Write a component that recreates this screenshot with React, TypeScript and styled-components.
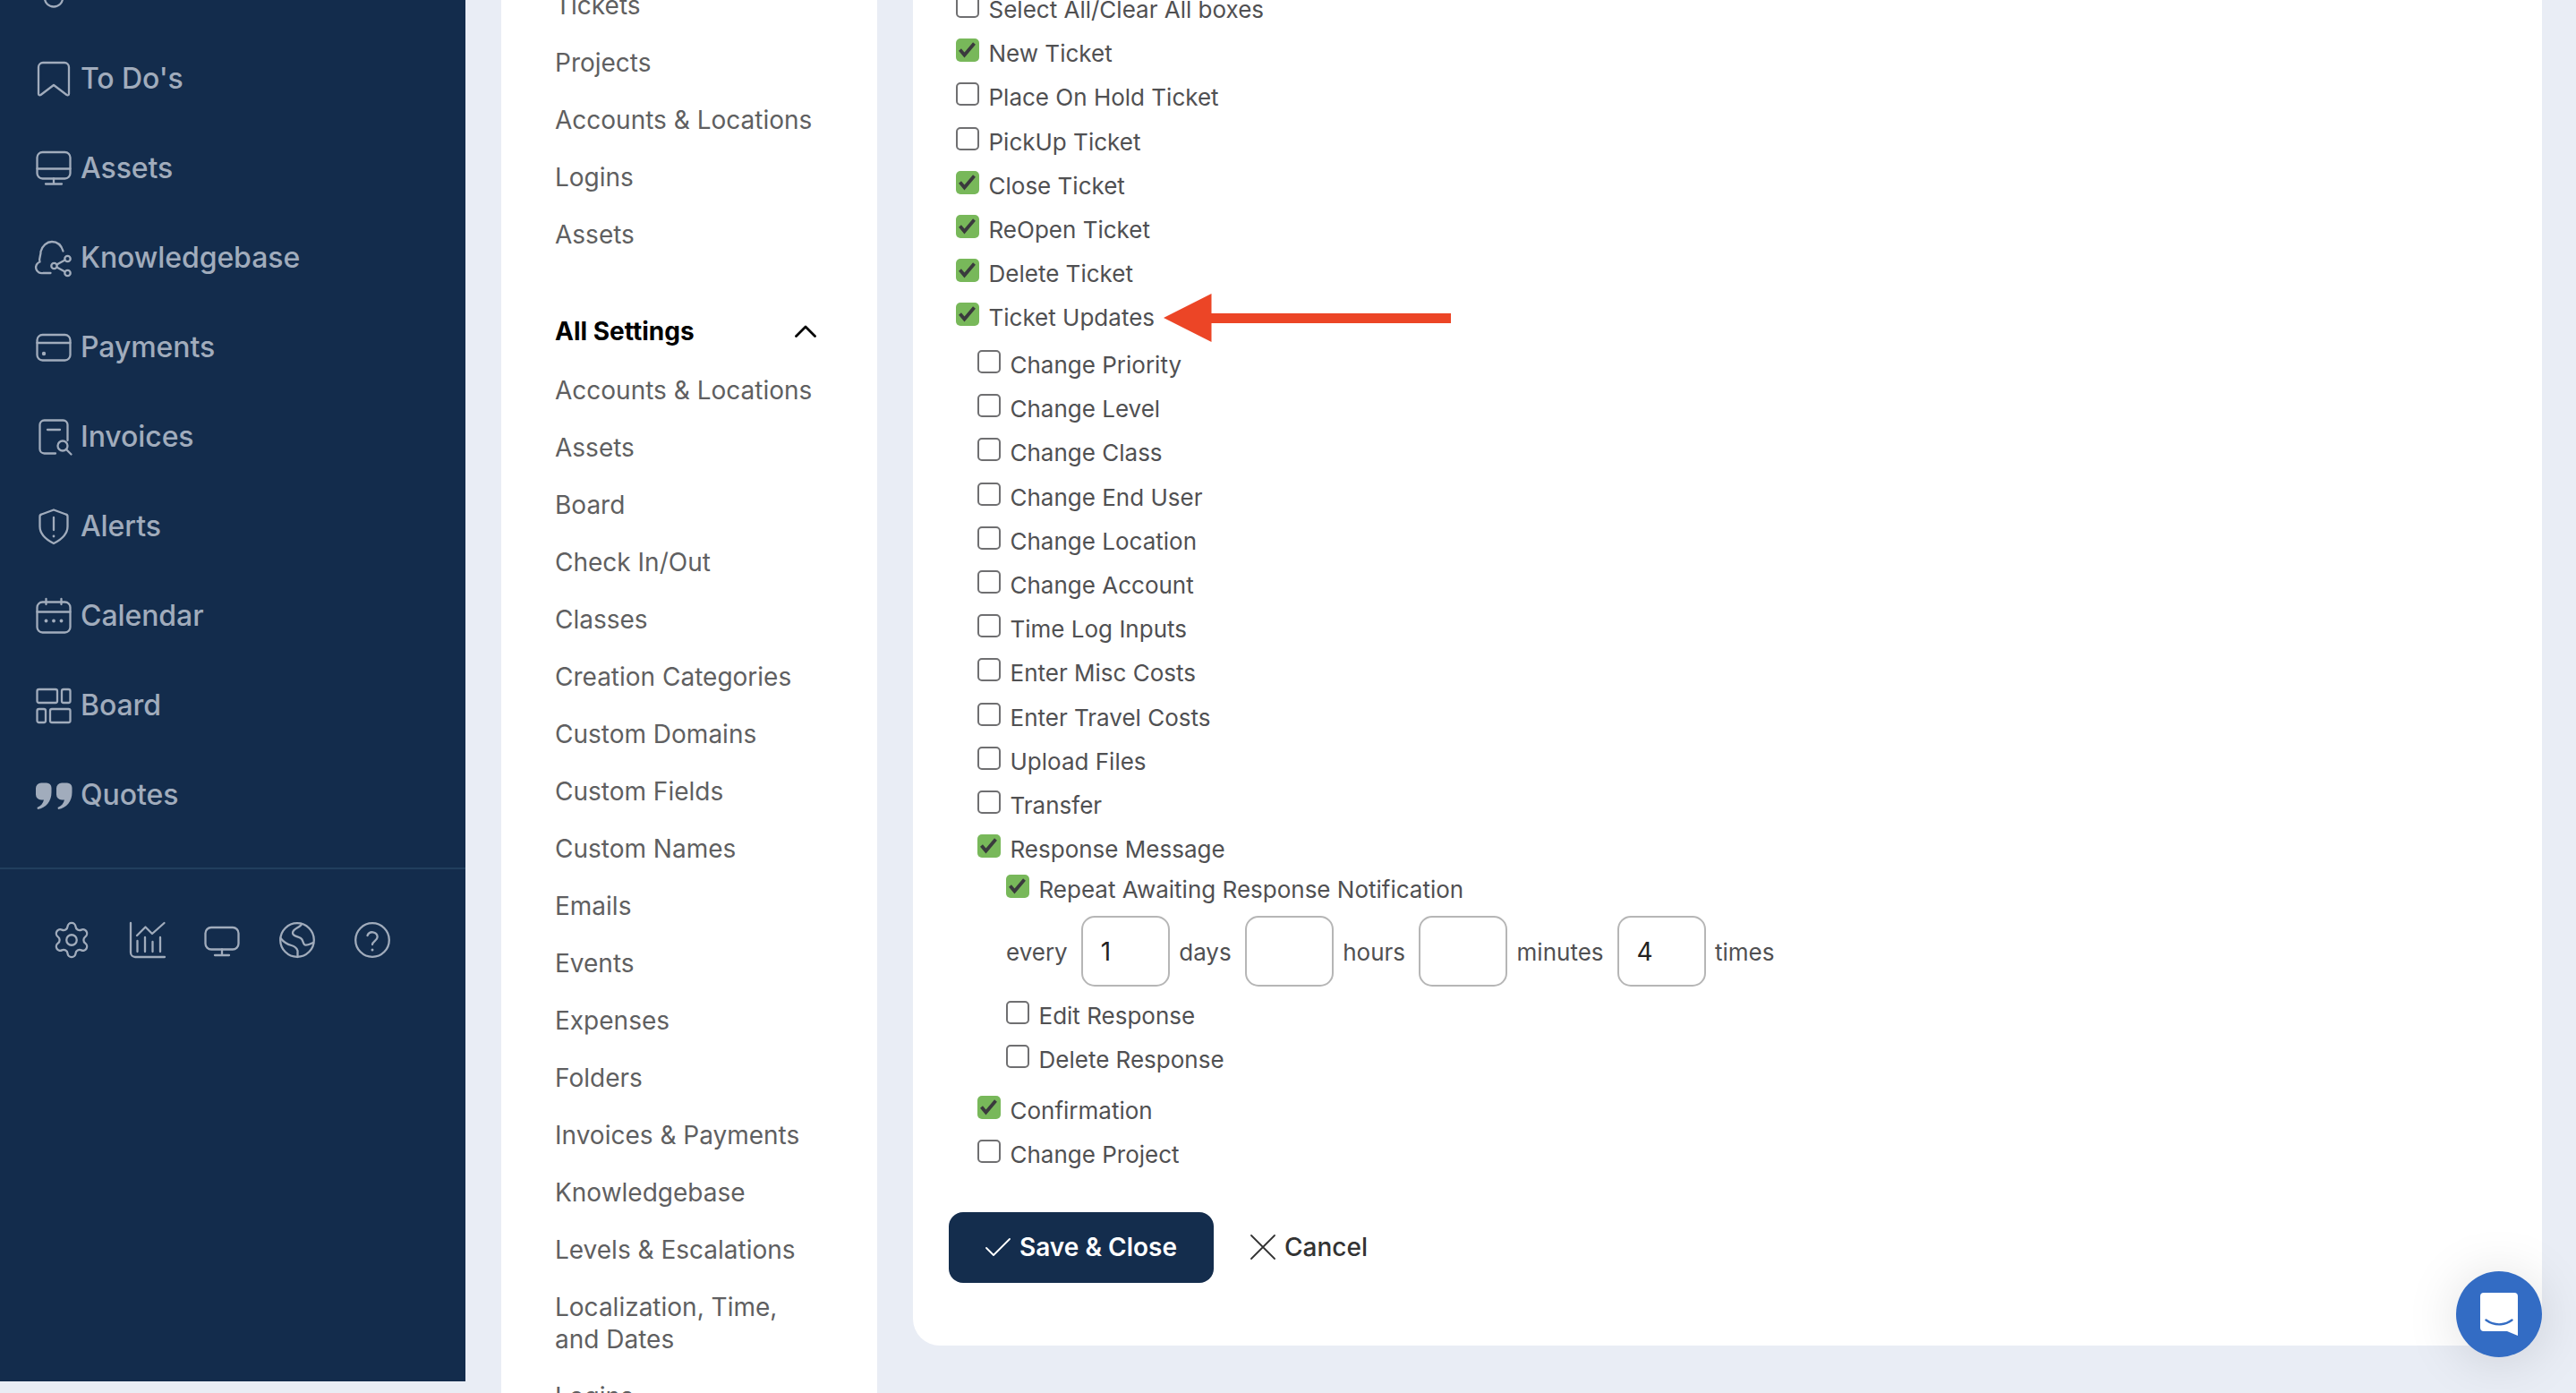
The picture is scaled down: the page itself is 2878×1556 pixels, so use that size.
import React from 'react';
import styled, { createGlobalStyle } from 'styled-components';
import { Settings } from 'lucide-react';

const Global = createGlobalStyle`
  html, body { margin: 0; padding: 0; background: #e9edf5; }
  * { box-sizing: border-box; }
  body { font-family: Inter, "Liberation Sans", sans-serif; }
`;

const Shell = styled.div`
  position: relative;
  display: flex;
  align-items: flex-start;
  width: 2878px;
  height: 1556px;
  overflow: hidden;
  background: #e9edf5;
`;

const Sidebar = styled.aside`
  flex: none;
  width: 520px;
  height: 1543px;
  background: #132c4c;
  color: #a1acbc;
  overflow: hidden;
`;

const Nav = styled.nav`
  margin-top: -62.5px;
  display: flex;
  flex-direction: column;
`;

const NavItem = styled.a`
  display: flex;
  align-items: center;
  gap: 10px;
  height: 100px;
  padding-left: 40px;
  font-size: 32px;
  font-weight: 500;
  letter-spacing: -0.08px;
  color: #a1acbc;
`;

const Glyph = styled.svg.attrs({ viewBox: '0 0 40 40', fill: 'none', stroke: 'currentColor', strokeWidth: 2.3, strokeLinecap: 'round', strokeLinejoin: 'round' })`
  flex: none;
  width: 40px;
  height: 40px;
  overflow: visible;
`;

const Divider = styled.hr`
  margin: 31px 0 0;
  border: 0;
  height: 2px;
  background: #213f5e;
`;

const ToolRow = styled.div`
  display: flex;
  gap: 44px;
  padding: 59px 0 0 60px;
  color: #a1acbc;
`;

const GearIcon = styled(Settings)`
  flex: none;
  margin: -3px;
`;

const Middle = styled.div`
  flex: none;
  width: 420px;
  height: 1556px;
  margin-left: 40px;
  background: #fff;
  overflow: hidden;
`;

const MenuList = styled.ul`
  list-style: none;
  margin: -26px 0 0;
  padding: 0;
`;

const MenuItem = styled.li`
  padding: 14px 70px 14px 60px;
  font-size: 28px;
  line-height: 36px;
  color: #5f5f61;
`;

const MenuHeading = styled.li`
  display: flex;
  align-items: center;
  justify-content: space-between;
  margin: 44px 0 2px;
  padding: 14px 68px 14px 60px;
  font-size: 28px;
  line-height: 36px;
  font-weight: 700;
  color: #000;
`;

const Main = styled.main`
  flex: none;
  width: 1820px;
  height: 1503px;
  margin-left: 40px;
  background: #fff;
  border-radius: 0 0 30px 30px;
  padding: 0 0 0 48px;
  overflow: hidden;
`;

const Form = styled.form`
  margin-top: -6px;
`;

const CheckRow = styled.label<{ $h?: number }>`
  display: flex;
  align-items: flex-start;
  gap: 10.5px;
  height: ${(p) => p.$h ?? 49.2}px;
  font-size: 26px;
  line-height: 33px;
  color: #505052;
`;

const Box = styled.span<{ $checked?: boolean }>`
  flex: none;
  display: block;
  width: 26px;
  height: 26px;
  border-radius: 5px;
  border: ${(p) => (p.$checked ? 'none' : '2px solid #6f6f71')};
  background: ${(p) => (p.$checked ? '#78b85a' : '#fff')};
`;

const Tick = styled.svg.attrs({ viewBox: '0 0 26 26', fill: 'none' })`
  display: block;
  width: 26px;
  height: 26px;
`;

const SubGroup = styled.div`
  margin-top: 3.5px;
  padding-left: 24px;
`;

const Nested = styled.div`
  margin-top: -4px;
  padding-left: 32px;
`;

const EveryRow = styled.div`
  display: flex;
  align-items: center;
  height: 79px;
  margin-bottom: 16px;
  padding-top: 1px;
  font-size: 26px;
  color: #505052;
`;

const NumberField = styled.input`
  width: 99px;
  height: 79px;
  margin: -1px 10.5px 0 15px;
  padding: 0 0 0 20px;
  border: 2px solid #b6b6b6;
  border-radius: 15px;
  background: #fff;
  font: 400 28px Inter, "Liberation Sans", sans-serif;
  color: #222;
  outline: none;
`;

const LateGroup = styled.div`
  margin-top: 7.5px;
`;

const Actions = styled.div`
  display: flex;
  align-items: center;
  margin: 31.5px 0 0 -8px;
`;

const SaveButton = styled.button`
  display: flex;
  align-items: center;
  justify-content: center;
  gap: 10px;
  width: 296px;
  height: 79px;
  border: 0;
  border-radius: 16px;
  background: #142d4d;
  color: #fff;
  font: 600 28px Inter, "Liberation Sans", sans-serif;
`;

const CancelButton = styled.button`
  display: flex;
  align-items: center;
  gap: 10px;
  margin-left: 41px;
  padding: 0;
  border: 0;
  background: none;
  color: #333;
  font: 500 28px Inter, "Liberation Sans", sans-serif;
`;

const Arrow = styled.svg`
  position: absolute;
  left: 1300px;
  top: 328px;
  width: 321px;
  height: 54px;
`;

const ChatBubble = styled.div`
  position: absolute;
  right: 38px;
  bottom: 40px;
  width: 96px;
  height: 96px;
  display: flex;
  align-items: center;
  justify-content: center;
  border-radius: 50%;
  background: #336cc4;
  box-shadow: 0 4px 60px rgba(0, 0, 0, 0.13);
`;

type NavEntry = { label: string; icon: React.ReactNode };

const dot = { fill: 'currentColor', stroke: 'none' };

const navItems: NavEntry[] = [
  { label: '', icon: <path d="M10 30a10 9.5 0 0 0 20 0" /> },
  { label: "To Do's", icon: <path d="M3 37V7a5 5 0 0 1 5-5h24a5 5 0 0 1 5 5v30a1.5 1.5 0 0 1-2.5 1L20 27 5.5 38A1.5 1.5 0 0 1 3 37z" /> },
  {
    label: 'Assets',
    icon: (
      <>
        <rect x="1.5" y="2" width="37" height="29.5" rx="6" />
        <path d="M1.5 20.5h37M20 31.5v6M11 37.5h18" />
      </>
    ),
  },
  {
    label: 'Knowledgebase',
    icon: (
      <>
        <path d="M16.5 37H8a6.5 6.5 0 0 1-3.5-12.5C3 20 6 17.5 5.5 13 7 6.5 12.5 2 18 2c6 0 10.500 4 12.500 10.500" />
        <circle cx="20.500" cy="29" r="3.200" />
        <circle cx="35.500" cy="21" r="3.200" />
        <circle cx="35.500" cy="37" r="3.200" />
        <path d="M23.500 27.500l9-5M23.500 30.500l9 5" />
      </>
    ),
  },
  {
    label: 'Payments',
    icon: (
      <>
        <rect x="1.500" y="6" width="37" height="28.500" rx="6" />
        <path d="M1.500 15h37" />
        <circle cx="9" cy="27" r="2.200" style={dot} />
      </>
    ),
  },
  {
    label: 'Invoices',
    icon: (
      <>
        <path d="M22 38.500H9.500a5 5 0 0 1-5-5V6.500a5 5 0 0 1 5-5h21a5 5 0 0 1 5 5V24" />
        <path d="M13 12h14" />
        <circle cx="30" cy="30" r="5.500" />
        <path d="M34 34l5.500 5.500" />
      </>
    ),
  },
  {
    label: 'Alerts',
    icon: (
      <>
        <path d="M20 1.500l13.500 5a2.500 2.500 0 0 1 2 2.500v11c0 9-7.500 15-15.500 19C12 35 4.500 29 4.500 20V9a2.500 2.500 0 0 1 2-2.500z" />
        <path d="M20 10v14" />
        <circle cx="20" cy="31" r="1.400" style={dot} />
      </>
    ),
  },
  {
    label: 'Calendar',
    icon: (
      <>
        <rect x="1.500" y="4.500" width="37" height="34" rx="6" />
        <path d="M11.500 1v6M28.500 1v6M1.500 15.500h37" />
        <circle cx="11.500" cy="25.500" r="1.900" style={dot} />
        <circle cx="20" cy="25.500" r="1.900" style={dot} />
        <circle cx="28.500" cy="25.500" r="1.900" style={dot} />
      </>
    ),
  },
  {
    label: 'Board',
    icon: (
      <>
        <rect x="1.500" y="2" width="22.500" height="15" rx="2" />
        <rect x="29" y="2" width="9.500" height="15" rx="2" />
        <rect x="1.500" y="24" width="9.500" height="15" rx="2" />
        <rect x="16" y="24" width="22.500" height="15" rx="2" />
      </>
    ),
  },
  {
    label: 'Quotes',
    icon: (
      <g fill="currentColor" stroke="none">
        <path d="M0 12.500a6 6 0 0 1 6-6h6a5.500 5.500 0 0 1 5.500 5.500v5c0 10-6 17.500-15.500 19l-.5-2c4-1.500 6.500-4.500 7.500-8.500H6a6 6 0 0 1-6-6z" />
        <path d="M23 12.500a6 6 0 0 1 6-6h6a5.500 5.500 0 0 1 5.500 5.500v5c0 10-6 17.500-15.500 19l-.5-2c4-1.500 6.500-4.500 7.500-8.500H29a6 6 0 0 1-6-6z" />
      </g>
    ),
  },
];

const topMenu = ['Tickets', 'Projects', 'Accounts & Locations', 'Logins', 'Assets'];
const settingsMenu = [
  'Accounts & Locations', 'Assets', 'Board', 'Check In/Out', 'Classes', 'Creation Categories',
  'Custom Domains', 'Custom Fields', 'Custom Names', 'Emails', 'Events', 'Expenses', 'Folders',
  'Invoices & Payments', 'Knowledgebase', 'Levels & Escalations', 'Localization, Time, and Dates', 'Logins',
];

const Check = ({ label, checked, h }: { label: string; checked?: boolean; h?: number }) => (
  <CheckRow $h={h}>
    <Box $checked={checked}>
      {checked && (
        <Tick>
          <path d="M4.500 12.500l5 6L20.500 5.500" stroke="#3a3a3d" strokeWidth="3.800" />
        </Tick>
      )}
    </Box>
    {label}
  </CheckRow>
);

export default function App() {
  return (
    <Shell>
      <Global />
      <Sidebar>
        <Nav>
          {navItems.map((n, i) => (
            <NavItem key={i}>
              <Glyph>{n.icon}</Glyph>
              {n.label}
            </NavItem>
          ))}
        </Nav>
        <Divider />
        <ToolRow>
          <GearIcon size={46} strokeWidth={1.2} />
          <Glyph>
            <path d="M2 1v33a5 5 0 0 0 5 5h33" />
            <path d="M9 15l9.500-9.500L26 13 39.500 1" />
            <path d="M9.500 21v12M18 17v16M26.500 22v11M35 17v16" />
          </Glyph>
          <Glyph>
            <rect x="1.500" y="6" width="37" height="24.500" rx="6.500" />
            <path d="M20 30.500v6M12 37h16" />
          </Glyph>
          <Glyph>
            <circle cx="20" cy="20" r="18.800" />
            <path d="M25 2c-1 4-10 5-10 10 0 4 6 4 9 6 3 2 2 5 4 7s7-1 10-2" />
            <path d="M1.500 18c4 5 8 7 12 8 4 1 6 3 7 6v7" />
          </Glyph>
          <Glyph>
            <circle cx="20" cy="20" r="18.800" />
            <path d="M14.500 15a5.800 5.800 0 0 1 11.200 1.600c0 3.900-5.700 5-5.700 8.400" />
            <circle cx="20" cy="31" r="1.500" style={dot} />
          </Glyph>
        </ToolRow>
      </Sidebar>

      <Middle>
        <MenuList>
          {topMenu.map((m) => (
            <MenuItem key={m}>{m}</MenuItem>
          ))}
          <MenuHeading>
            All Settings
            <svg width="24" height="14" viewBox="0 0 24 14" fill="none">
              <path d="M1.500 12.500L12 2l10.500 10.500" stroke="#000" strokeWidth="2.800" strokeLinecap="round" strokeLinejoin="round" />
            </svg>
          </MenuHeading>
          {settingsMenu.map((m) => (
            <MenuItem key={m}>{m}</MenuItem>
          ))}
        </MenuList>
      </Middle>

      <Main>
        <Form>
          <Check label="Select All/Clear All boxes" />
          <Check label="New Ticket" checked />
          <Check label="Place On Hold Ticket" />
          <Check label="PickUp Ticket" />
          <Check label="Close Ticket" checked />
          <Check label="ReOpen Ticket" checked />
          <Check label="Delete Ticket" checked />
          <Check label="Ticket Updates" checked />
          <SubGroup>
            <Check label="Change Priority" />
            <Check label="Change Level" />
            <Check label="Change Class" />
            <Check label="Change End User" />
            <Check label="Change Location" />
            <Check label="Change Account" />
            <Check label="Time Log Inputs" />
            <Check label="Enter Misc Costs" />
            <Check label="Enter Travel Costs" />
            <Check label="Upload Files" />
            <Check label="Transfer" />
            <Check label="Response Message" checked />
            <Nested>
              <Check label="Repeat Awaiting Response Notification" checked h={46} />
              <EveryRow>
                every
                <NumberField defaultValue="1" />
                days
                <NumberField defaultValue="" />
                hours
                <NumberField defaultValue="" />
                minutes
                <NumberField defaultValue="4" />
                times
              </EveryRow>
              <Check label="Edit Response" h={49} />
              <Check label="Delete Response" h={49} />
            </Nested>
            <LateGroup>
              <Check label="Confirmation" checked />
              <Check label="Change Project" />
            </LateGroup>
          </SubGroup>
          <Actions>
            <SaveButton type="button">
              <svg width="28" height="20" viewBox="0 0 28 20" fill="none">
                <path d="M1 11l8 8L27 1" stroke="#fff" strokeWidth="1.800" strokeLinecap="round" strokeLinejoin="round" />
              </svg>
              Save &amp; Close
            </SaveButton>
            <CancelButton type="button">
              <svg width="28" height="28" viewBox="0 0 28 28" fill="none">
                <path d="M1 1l26 26M27 1L1 27" stroke="#333" strokeWidth="1.800" strokeLinecap="round" />
              </svg>
              Cancel
            </CancelButton>
          </Actions>
        </Form>
      </Main>

      <Arrow viewBox="0 0 321 54">
        <path d="M0 27L53.500 0v22H321v11H53.500v21z" fill="#ec4526" />
      </Arrow>

      <ChatBubble>
        <svg width="42" height="48" viewBox="0 0 42 48">
          <path d="M4 0h34a4 4 0 0 1 4 4v44l-12-5H4a4 4 0 0 1-4-4V4a4 4 0 0 1 4-4z" fill="#fff" />
          <path d="M6.500 30.500c9 6.500 20 6.500 29 0" fill="none" stroke="#336cc4" strokeWidth="2.400" strokeLinecap="round" />
        </svg>
      </ChatBubble>
    </Shell>
  );
}
